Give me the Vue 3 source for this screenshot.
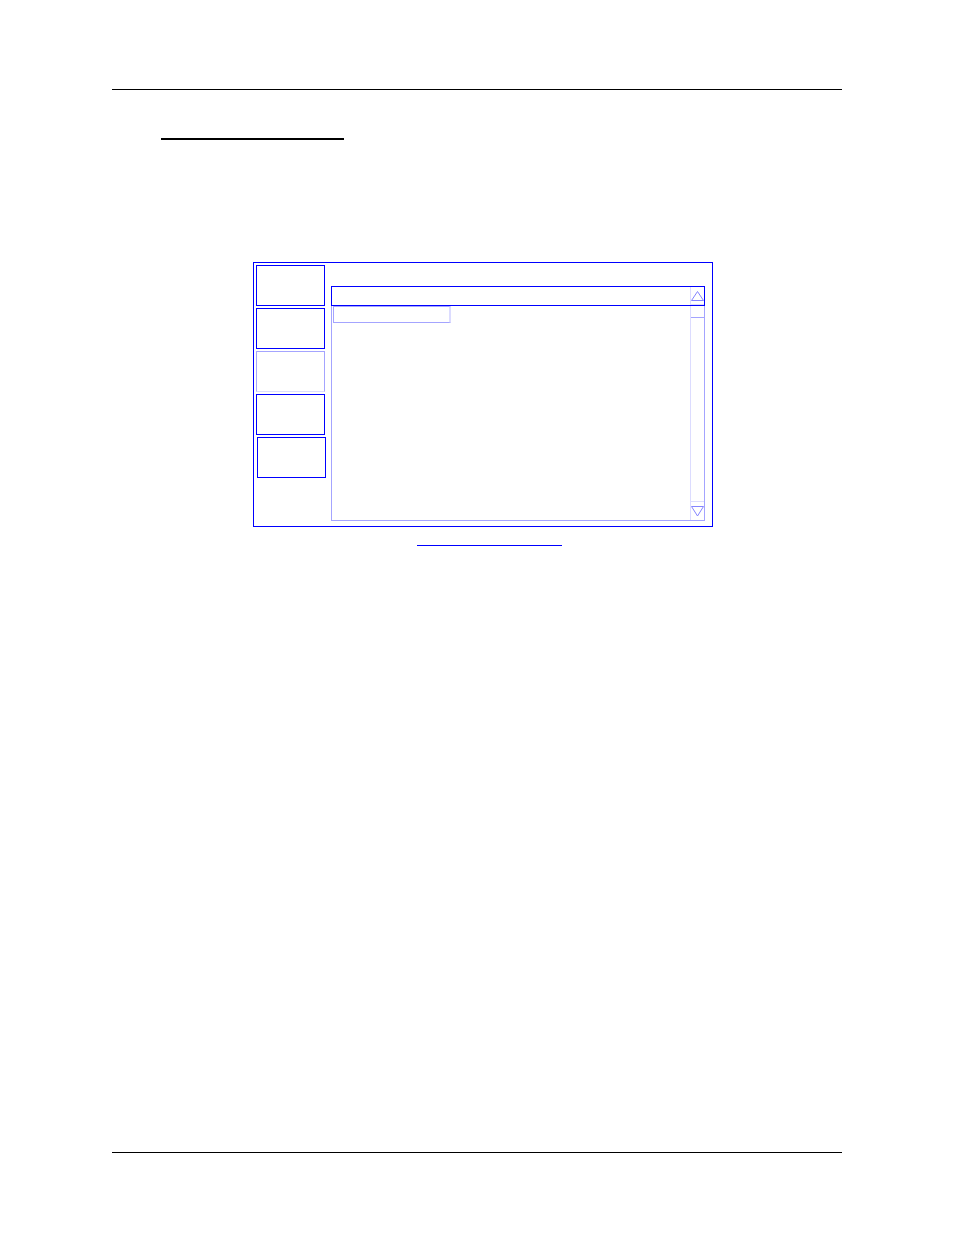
<template>
  <main class="page">
    <hr class="rule" />
    <div class="heading-line"></div>

    <section class="screen">
      <nav class="menu">
        <button
          v-for="item in menuItems"
          :key="item.id"
          type="button"
          class="menu-btn"
          :class="item.state"
          :aria-label="item.label"
        ></button>
      </nav>

      <div class="panel">
        <div class="panel-head">
          <button type="button" class="arrow-btn up" aria-label="Scroll up">
            <svg width="13" height="10" viewBox="0 0 13 10">
              <path d="M0.5 9.5L6.5 0.5L12.5 9.5Z" />
            </svg>
          </button>
        </div>
        <div class="panel-body">
          <div class="list">
            <input type="text" class="entry" aria-label="Entry" />
          </div>
          <div class="track">
            <div class="thumb"></div>
            <button type="button" class="arrow-btn down" aria-label="Scroll down">
              <svg width="13" height="11" viewBox="0 0 13 11">
                <path d="M0.5 0.5H12.5L6.5 10Z" />
              </svg>
            </button>
          </div>
        </div>
      </div>
    </section>

    <div class="caption-line"></div>
    <hr class="rule bottom" />
  </main>
</template>

<script setup>
const menuItems = [
  { id: 1, label: "Menu 1", state: "" },
  { id: 2, label: "Menu 2", state: "" },
  { id: 3, label: "Menu 3", state: "dimmed" },
  { id: 4, label: "Menu 4", state: "" },
  { id: 5, label: "Menu 5", state: "shifted" },
];
</script>

<style>
body {
  margin: 0;
  background: #fff;
}
</style>

<style scoped>
.page {
  box-sizing: border-box;
  display: flex;
  flex-direction: column;
  min-height: 100vh;
  padding: 89px 112px 82px;
  font-family: "Liberation Sans", Arial, sans-serif;
}

.page * {
  box-sizing: border-box;
}

.rule {
  width: 100%;
  height: 1px;
  margin: 0;
  border: none;
  background: #000;
}

.rule.bottom {
  margin-top: auto;
}

.heading-line {
  width: 183px;
  margin: 48px 0 0 49px;
  border-top: 2px solid #000;
}

/* device screen */
.screen {
  display: flex;
  gap: 6px;
  width: 63%;
  min-width: 300px;
  margin: 122px 0 0 141px;
  padding: 2px 7px 5px 2px;
  border: 1px solid #00f;
}

.menu {
  display: flex;
  flex-direction: column;
  gap: 2px;
  width: 69px;
}

.menu-btn {
  flex-shrink: 0;
  width: 69px;
  height: 41px;
  padding: 0;
  border: 1px solid #00f;
  background: none;
}

.menu-btn.dimmed {
  border-color: #a4a4ff;
  border-bottom-color: #dcdcff;
}

.menu-btn.shifted {
  margin-left: 1px;
}

.panel {
  flex: 1;
  margin-top: 21px;
}

.panel-head {
  display: flex;
  justify-content: flex-end;
  height: 20px;
  border: 1px solid #00f;
}

.panel-body {
  display: flex;
  height: 215px;
  border: 1px solid #a4a4ff;
  border-top: none;
}

.list {
  flex: 1;
  padding-left: 1px;
}

.entry {
  display: block;
  width: 118px;
  height: 17px;
  padding: 0 4px;
  border: 1px solid #a4a4ff;
  border-right: 2px solid #dcdcff;
  background: none;
  font-size: 12px;
}

/* scrollbar */
.track {
  display: flex;
  flex-direction: column;
  justify-content: space-between;
  width: 14px;
  border-left: 1px solid #dcdcff;
}

.thumb {
  height: 12px;
  border-bottom: 1px solid #a4a4ff;
}

.arrow-btn {
  display: flex;
  justify-content: center;
  padding: 4px 0 0;
  border: none;
  background: none;
}

.arrow-btn.up {
  width: 14px;
  height: 18px;
  border-left: 1px solid #dcdcff;
  border-bottom: 1px solid #dcdcff;
}

.arrow-btn.down {
  width: 13px;
  height: 19px;
  border-top: 1px solid #dcdcff;
}

.arrow-btn svg {
  flex-shrink: 0;
  fill: none;
  stroke: #8484ff;
  stroke-width: 1;
}

.caption-line {
  width: 145px;
  margin: 18px 0 0 305px;
  border-top: 1px solid #00f;
}
</style>
